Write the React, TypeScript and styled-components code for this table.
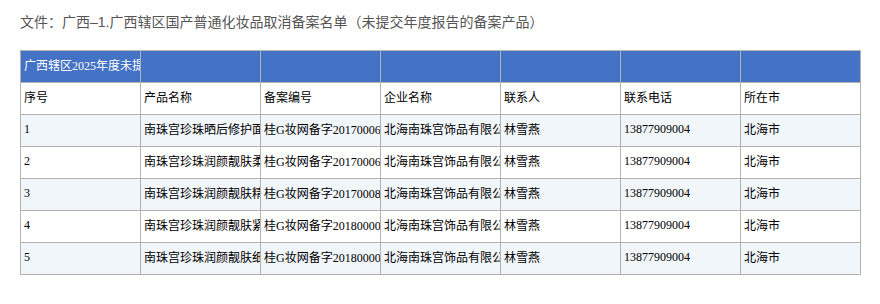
import styled, { createGlobalStyle } from "styled-components";

const GlobalStyle = createGlobalStyle`
  html, body {
    margin: 0;
    padding: 0;
    background: #fff;
  }
`;

const Page = styled.div`
  padding: 12px 20px 0 20px;
  font-family: "Liberation Sans", "Noto Sans CJK SC", sans-serif;
`;

const Title = styled.div`
  height: 20px;
  line-height: 20px;
  font-size: 14px;
  color: #555;
  margin-bottom: 18px;
  white-space: nowrap;
`;

const Table = styled.table`
  border-collapse: collapse;
  table-layout: fixed;
  width: 841px;
  font-family: "Liberation Serif", "Noto Sans CJK SC", serif;
  font-size: 12px;
  color: #000;
`;

const Row = styled.tr<{ $tint?: boolean }>`
  height: 32px;
  background: ${(p) => (p.$tint ? "#f1f6fb" : "#fff")};
`;

const HeadRow = styled.tr`
  height: 32px;
  background: #4472c4;
  color: #fff;
`;

const Cell = styled.td`
  width: 120px;
  border: 1px solid #b2b2b2;
  padding: 0 3px 3px 3px;
  white-space: nowrap;
  overflow: hidden;
  text-overflow: clip;
  vertical-align: middle;
  box-sizing: border-box;
`;

const columns = ["序号", "产品名称", "备案编号", "企业名称", "联系人", "联系电话", "所在市"];

const rows = [
  ["1", "南珠宫珍珠晒后修护面膜", "桂G妆网备字2017000612"],
  ["2", "南珠宫珍珠润颜靓肤柔肤水", "桂G妆网备字2017000688"],
  ["3", "南珠宫珍珠润颜靓肤精华液", "桂G妆网备字2017000801"],
  ["4", "南珠宫珍珠润颜靓肤紧致霜", "桂G妆网备字2018000012"],
  ["5", "南珠宫珍珠润颜靓肤细致乳", "桂G妆网备字2018000013"],
];

export default function App() {
  return (
    <Page>
      <GlobalStyle />
      <Title>文件：广西–1.广西辖区国产普通化妆品取消备案名单（未提交年度报告的备案产品）</Title>
      <Table>
        <tbody>
          <HeadRow>
            <Cell>广西辖区2025年度未提交年度报告的备案产品</Cell>
            <Cell />
            <Cell />
            <Cell />
            <Cell />
            <Cell />
            <Cell />
          </HeadRow>
          <Row>
            {columns.map((c) => (
              <Cell key={c}>{c}</Cell>
            ))}
          </Row>
          {rows.map((r, i) => (
            <Row key={r[0]} $tint={i % 2 === 0}>
              <Cell>{r[0]}</Cell>
              <Cell>{r[1]}</Cell>
              <Cell>{r[2]}</Cell>
              <Cell>北海南珠宫饰品有限公司</Cell>
              <Cell>林雪燕</Cell>
              <Cell>13877909004</Cell>
              <Cell>北海市</Cell>
            </Row>
          ))}
        </tbody>
      </Table>
    </Page>
  );
}
